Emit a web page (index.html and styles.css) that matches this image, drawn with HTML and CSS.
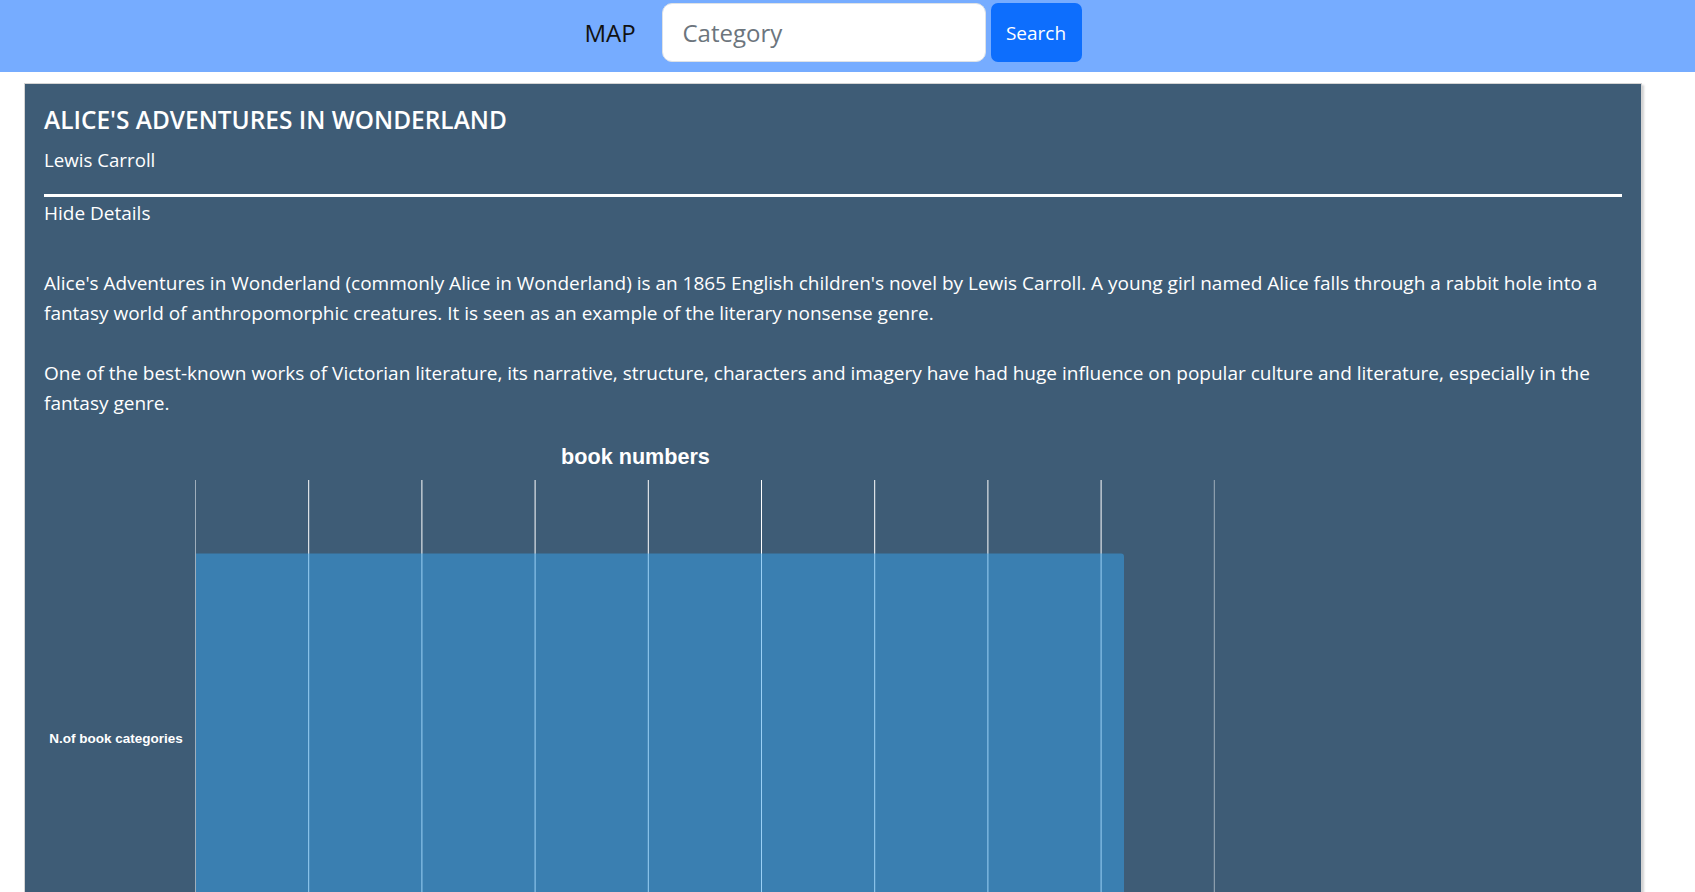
FILE: index.html
```html
<!DOCTYPE html>
<html lang="en">
<head>
<meta charset="utf-8">
<title>MAP</title>
<link rel="stylesheet" href="styles.css">
</head>
<body>
<header class="topbar">
  <div class="topbar-inner">
    <span class="brand">MAP</span>
    <form class="search">
      <input class="search-input" type="text" placeholder="Category">
      <button class="search-btn" type="button">Search</button>
    </form>
  </div>
</header>
<main class="page">
  <section class="card">
    <h5 class="card-title">ALICE'S ADVENTURES IN WONDERLAND</h5>
    <p class="card-author">Lewis Carroll</p>
    <hr class="divider">
    <div class="toggle">Hide Details</div>
    <div class="desc">
      <p>Alice's Adventures in Wonderland (commonly Alice in Wonderland) is an 1865 English children's novel by Lewis Carroll. A young girl named Alice falls through a rabbit hole into a fantasy world of anthropomorphic creatures. It is seen as an example of the literary nonsense genre.</p>
      <p>One of the best-known works of Victorian literature, its narrative, structure, characters and imagery have had huge influence on popular culture and literature, especially in the fantasy genre.</p>
    </div>
    <svg class="chart" width="1183" height="470" viewBox="0 0 1183 470">
      <text class="chart-title" x="591.5" y="27" text-anchor="middle">book numbers</text>
      <g class="grid">
        <line class="axis" x1="151.5" y1="43" x2="151.5" y2="470"/>
        <line x1="264.7" y1="43" x2="264.7" y2="470"/>
        <line x1="377.9" y1="43" x2="377.9" y2="470"/>
        <line x1="491.1" y1="43" x2="491.1" y2="470"/>
        <line x1="604.3" y1="43" x2="604.3" y2="470"/>
        <line x1="717.5" y1="43" x2="717.5" y2="470"/>
        <line x1="830.7" y1="43" x2="830.7" y2="470"/>
        <line x1="943.9" y1="43" x2="943.9" y2="470"/>
        <line x1="1057.1" y1="43" x2="1057.1" y2="470"/>
        <line class="axis" x1="1170.3" y1="43" x2="1170.3" y2="470"/>
      </g>
      <path class="bar" d="M152 116.5 H1077 Q1080 116.5 1080 119.5 V470 H152 Z"/>
      <text class="chart-label" x="138.7" y="306" text-anchor="end">N.of book categories</text>
    </svg>
  </section>
</main>
</body>
</html>
```

FILE: styles.css
```css
html, body {
  margin: 0;
  padding: 0;
  background: #ffffff;
  overflow: hidden;
}

body {
  font-family: "Open Sans", "Noto Sans", "DejaVu Sans", sans-serif;
  color: #212529;
}

.topbar {
  height: 72px;
  background: #76acff;
}

.topbar-inner {
  display: flex;
  justify-content: center;
  align-items: center;
  height: 59px;
  padding: 3px 29px 0 0;
}

.brand {
  width: 50px;
  margin-right: 27px;
  text-align: center;
  font-size: 24px;
  color: #111;
}

.search {
  display: flex;
  align-items: stretch;
  height: 59px;
  margin: 0;
  gap: 5px;
}

.search-input {
  box-sizing: border-box;
  width: 324px;
  height: 59px;
  padding: 0 20px;
  border: 1px solid #dee2e6;
  border-radius: 10px;
  font-family: inherit;
  font-size: 24px;
  color: #212529;
  background: #fff;
  outline: none;
}

.search-input::placeholder {
  color: #6c757d;
}

.search-btn {
  width: 91px;
  height: 59px;
  padding: 0;
  border: none;
  border-radius: 7px;
  background: #0d6efd;
  color: #fff;
  font-family: inherit;
  font-size: 19px;
}

.page {
  padding: 11px 53px 0 24px;
}

.card {
  background: #3e5c76;
  border: 1px solid #d4d4d4;
  box-shadow: 2px 2px 2px rgba(0, 0, 0, 0.18);
  padding: 21px 19px 0 19px;
  color: #ffffff;
}

.card-title {
  margin: 0 0 10px;
  font-size: 24.45px;
  font-weight: 600;
  line-height: 30px;
}

.card-author {
  margin: 0;
  font-size: 18.7px;
  line-height: 30px;
}

.divider {
  margin: 19px 0 1px;
  height: 3px;
  border: 0;
  background: #ffffff;
  opacity: 1;
}

.toggle {
  font-size: 19px;
  line-height: 30px;
}

.desc {
  margin-top: 40px;
}

.desc p {
  margin: 0 0 30px;
  font-size: 19px;
  line-height: 30px;
}

.desc p:last-child {
  margin-bottom: 19px;
}

.chart {
  display: block;
}

.chart-title {
  font-family: "Liberation Sans", Arial, sans-serif;
  font-weight: 700;
  font-size: 21.6px;
  fill: #ffffff;
}

.chart-label {
  font-family: "Liberation Sans", Arial, sans-serif;
  font-weight: 700;
  font-size: 13.5px;
  fill: #ffffff;
}

.grid line {
  stroke: #ffffff;
  stroke-width: 1;
}

.grid line.axis {
  stroke: rgba(255, 255, 255, 0.5);
}

.bar {
  fill: rgba(54, 162, 235, 0.5);
}
```
